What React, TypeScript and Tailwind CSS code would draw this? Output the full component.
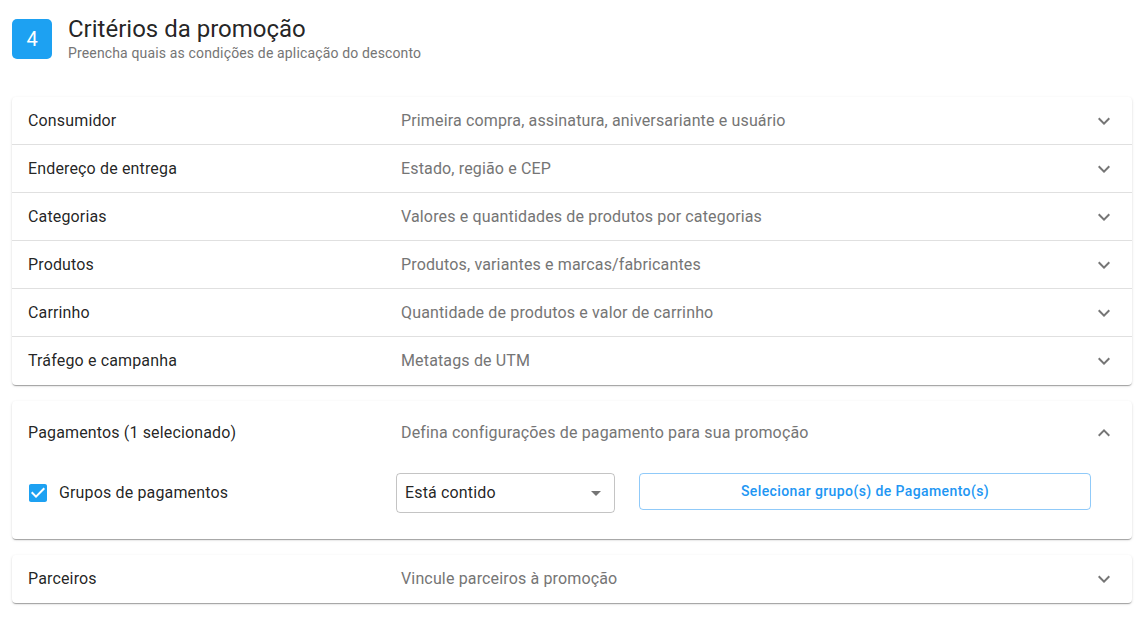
import React from "react";

const ExpandMore = () => (
  <svg width="24" height="24" viewBox="0 0 24 24" className="fill-[rgba(0,0,0,0.54)]">
    <path d="M16.59 8.59L12 13.17 7.41 8.59 6 10l6 6 6-6z" />
  </svg>
);

const ExpandLess = () => (
  <svg width="24" height="24" viewBox="0 0 24 24" className="fill-[rgba(0,0,0,0.54)]">
    <path d="M12 8l-6 6 1.41 1.41L12 10.83l4.59 4.58L18 14z" />
  </svg>
);

const rows = [
  ["Consumidor", "Primeira compra, assinatura, aniversariante e usuário"],
  ["Endereço de entrega", "Estado, região e CEP"],
  ["Categorias", "Valores e quantidades de produtos por categorias"],
  ["Produtos", "Produtos, variantes e marcas/fabricantes"],
  ["Carrinho", "Quantidade de produtos e valor de carrinho"],
  ["Tráfego e campanha", "Metatags de UTM"],
];

const paper =
  "bg-white rounded-[4px] shadow-[0px_2px_1px_-1px_rgba(0,0,0,0.2),0px_1px_1px_0px_rgba(0,0,0,0.14),0px_1px_3px_0px_rgba(0,0,0,0.12)]";

function Row({ title, sub, last }: { title: string; sub: string; last?: boolean }) {
  return (
    <div
      className={`flex items-center h-[48px] pl-[16px] pr-[16px] ${
        last ? "" : "border-b border-[rgba(0,0,0,0.12)]"
      }`}
    >
      <div className="w-[373px] shrink-0 text-[16px] tracking-[0.15px] text-[rgba(0,0,0,0.87)]">
        {title}
      </div>
      <div className="flex-1 text-[16px] tracking-[0.15px] text-[#757575]">{sub}</div>
      <ExpandMore />
    </div>
  );
}

export default function App() {
  return (
    <div
      className="min-h-screen bg-white px-[12px] pt-[15px] pb-[20px]"
      style={{ fontFamily: "Roboto, 'Noto Sans', sans-serif" }}
    >
      <div className="flex items-start gap-[16px]">
        <div className="mt-[4px] w-[40px] h-[40px] rounded-[5px] bg-[#1da1f2] flex items-center justify-center text-white text-[20px]">
          4
        </div>
        <div>
          <div className="text-[24px] leading-[28px] text-[rgba(0,0,0,0.87)]">
            Critérios da promoção
          </div>
          <div className="text-[14px] leading-[20px] tracking-[0.15px] text-[#757575]">
            Preencha quais as condições de aplicação do desconto
          </div>
        </div>
      </div>

      <div className={`${paper} mt-[34px]`}>
        {rows.map(([t, s], i) => (
          <Row key={t} title={t} sub={s} last={i === rows.length - 1} />
        ))}
      </div>

      <div className={`${paper} mt-[16px]`}>
        <div className="flex items-center h-[64px] px-[16px]">
          <div className="w-[373px] shrink-0 text-[16px] tracking-[0.15px] text-[rgba(0,0,0,0.87)]">
            Pagamentos (1 selecionado)
          </div>
          <div className="flex-1 text-[16px] tracking-[0.15px] text-[#757575]">
            Defina configurações de pagamento para sua promoção
          </div>
          <ExpandLess />
        </div>
        <div className="flex items-start pl-[16px] pr-[16px] pt-[8px] pb-[26px]">
          <div className="w-[368px] shrink-0 h-[40px] flex items-center">
            <svg width="24" height="24" viewBox="0 0 24 24" className="fill-[#1da1f2] -ml-[2px]">
              <path d="M19 3H5c-1.11 0-2 .9-2 2v14c0 1.1.89 2 2 2h14c1.11 0 2-.9 2-2V5c0-1.1-.89-2-2-2zm-9 14l-5-5 1.41-1.41L10 14.17l7.59-7.59L19 8l-9 9z" />
            </svg>
            <span className="ml-[9px] text-[16px] tracking-[0.15px] text-[rgba(0,0,0,0.87)]">
              Grupos de pagamentos
            </span>
          </div>
          <div className="relative w-[219px] h-[40px] border border-[rgba(0,0,0,0.23)] rounded-[4px] flex items-center pl-[8px]">
            <span className="text-[16px] tracking-[0.15px] text-[rgba(0,0,0,0.87)]">Está contido</span>
            <svg
              width="24"
              height="24"
              viewBox="0 0 24 24"
              className="absolute right-[6px] top-[7px] fill-[rgba(0,0,0,0.54)]"
            >
              <path d="M7 10l5 5 5-5z" />
            </svg>
          </div>
          <button className="ml-[24px] w-[452px] h-[37px] border border-[rgba(33,150,243,0.5)] rounded-[4px] text-[14px] tracking-[0.4px] font-medium text-[#2196f3] flex items-center justify-center">
            Selecionar grupo(s) de Pagamento(s)
          </button>
        </div>
      </div>

      <div className={`${paper} mt-[16px]`}>
        <Row title="Parceiros" sub="Vincule parceiros à promoção" last />
      </div>
    </div>
  );
}
